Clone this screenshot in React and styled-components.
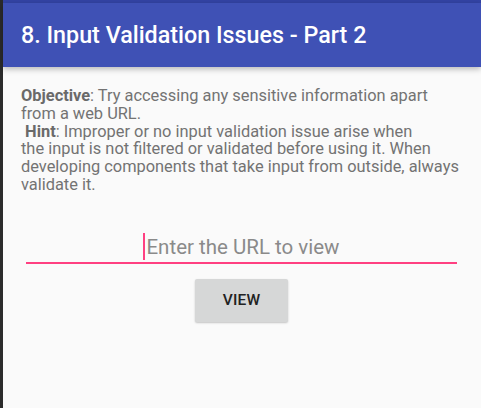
import styled, { createGlobalStyle } from "styled-components";

const GlobalStyle = createGlobalStyle`
  html, body {
    margin: 0;
    padding: 0;
    height: 100%;
    background-color: #2b2b2b;
  }
  #root {
    height: 100%;
  }
`;

const Screen = styled.div`
  margin-left: 3px;
  height: 100%;
  display: flex;
  flex-direction: column;
  background-color: #fafafa;
  font-family: Roboto, "Noto Sans", sans-serif;
`;

const StatusStrip = styled.div`
  height: 3px;
  background-color: #3344a5;
`;

const Toolbar = styled.header`
  height: 64px;
  display: flex;
  align-items: center;
  padding-left: 18px;
  background-color: #3f51b5;
  box-shadow: 0 2px 6px rgba(0, 0, 0, 0.28);
  position: relative;
  z-index: 1;
`;

const Title = styled.h1`
  margin: 0;
  color: #ffffff;
  font-size: 23.3px;
  font-weight: 500;
`;

const Content = styled.main`
  display: flex;
  flex-direction: column;
  padding: 20px 24px 0 18px;
`;

const Description = styled.p`
  margin: 0;
  color: #737373;
  font-size: 16.4px;
  line-height: 17.8px;
  white-space: nowrap;
`;

const Strong = styled.b`
  font-weight: 700;
  color: #6a6a6a;
`;

const Field = styled.div`
  margin: 36px 0 0 5px;
  display: flex;
  justify-content: center;
  align-items: center;
  height: 32px;
  border-bottom: 2px solid #ff4081;
`;

const Caret = styled.span`
  width: 2px;
  height: 27px;
  background-color: #ff4081;
  margin-right: 1px;
  margin-top: 2px;
`;

const Placeholder = styled.span`
  color: #8a8a8a;
  font-size: 20.5px;
  margin-top: 2px;
`;

const ViewButton = styled.button`
  align-self: center;
  margin: 15px 0 0 5px;
  width: 93px;
  height: 43px;
  border: none;
  border-radius: 2px;
  background-color: #d6d7d7;
  box-shadow: 0 1px 2px rgba(0, 0, 0, 0.22);
  color: #222222;
  font-family: Roboto, "Noto Sans", sans-serif;
  font-size: 15.5px;
  font-weight: 500;
  letter-spacing: 0.2px;
`;

function App() {
  return (
    <>
      <GlobalStyle />
      <Screen>
        <StatusStrip />
        <Toolbar>
          <Title>8. Input Validation Issues - Part 2</Title>
        </Toolbar>
        <Content>
          <Description>
            <Strong>Objective</Strong>: Try accessing any sensitive information
            apart
            <br />
            from a web URL.
            <br />
            &nbsp;<Strong>Hint</Strong>: Improper or no input validation issue
            arise when
            <br />
            the input is not filtered or validated before using it. When
            <br />
            developing components that take input from outside, always
            <br />
            validate it.
          </Description>
          <Field>
            <Caret />
            <Placeholder>Enter the URL to view</Placeholder>
          </Field>
          <ViewButton>VIEW</ViewButton>
        </Content>
      </Screen>
    </>
  );
}

export default App;
